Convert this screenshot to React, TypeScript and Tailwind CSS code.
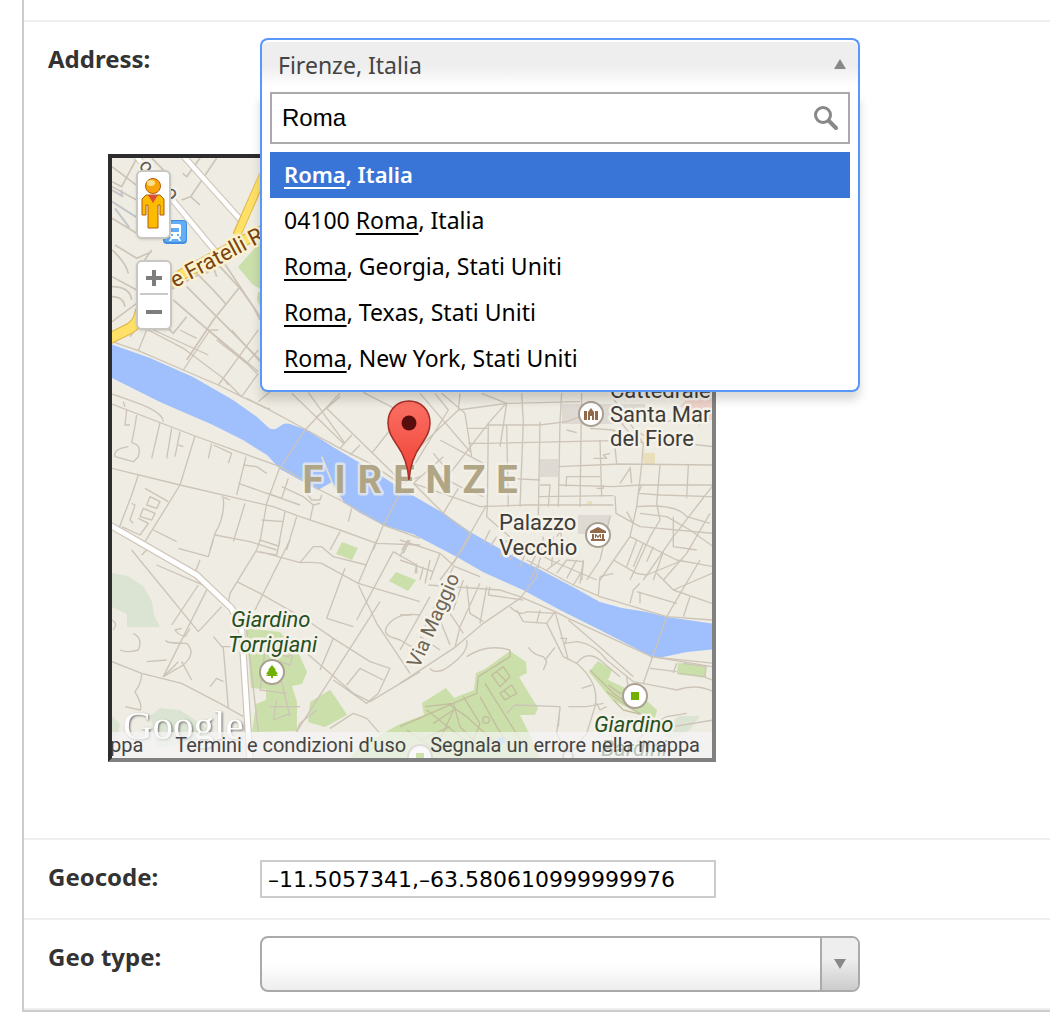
import React from "react";

const northWestRoads = [
  "M336 545L365 560L410 475M336 500L415 560M455 474L500 520M600 474L560 530L548 520M650 474L572 590L600 615",
  "M495 560L680 800L780 950M336 560L410 600M545 600L570 590",
  "M336 655L410 700M336 750C370 780 380 800 385 820M345 735L410 775L455 755M420 800L455 750",
  "M336 860Q390 860 395 900M336 890Q370 890 375 920M336 830L410 870M336 965L410 910M390 1010L415 975",
  "M510 870L640 800L660 800L720 865L760 920L780 960M560 860L780 1080M520 900L740 1090M600 830L650 800",
  "M720 860L640 960L560 1080M640 800L650 830M590 820L640 870L680 915M500 980L520 1000L560 950",
];

const westRoads = [
  "M36 35L115 62L250 120L355 165L425 200L500 235L620 300L720 355L810 400L900 460",
  "M145 0L250 55L370 145L425 200M115 62L140 0M160 0L325 75M240 0L290 25M250 120L330 0L355 0M355 165L475 0M325 0L475 125M395 0L480 95M350 30L440 100L470 130",
  "M425 200L475 130M440 100L475 60M370 145L385 165M475 215L510 185M440 205L500 235L510 235M575 190L730 340M625 187L735 340M720 190L615 300L540 415M790 187L960 275M755 315L720 355M650 260L720 200",
  "M680 235L900 450M815 370L870 300M780 345L750 375M900 490L850 585L820 660",
  "M36 192C100 215 190 240 190 275M36 222L285 318L540 410L660 480L720 510L850 585L960 625",
  "M36 415L240 465L520 530L600 560L720 600L830 640L960 645M70 215L75 230",
  "M285 318L240 465L135 635M180 278L155 385M215 295L200 385M240 305L225 380M235 345L250 350M335 340L325 385M340 345L395 370L385 400M110 255C100 330 90 340 100 340Q125 345 115 380L100 395L45 380C40 360 60 355 85 350",
  "M80 240L75 285L90 285M115 435L95 495L55 600M135 475L205 515M438 380L410 495M540 410L500 520L480 635M565 445L545 505L505 490M415 460L600 525M370 505Q375 560 345 610L330 660M435 520L400 635M430 405L470 410L500 430M365 500L390 510",
  "M345 615L450 635L530 660M485 570L550 575M555 545L535 650M590 560L560 660M720 605L690 660M755 535L745 575M620 490L635 510L660 510L665 495M640 525L630 570M545 470L610 500L640 525L660 520",
  "M150 500L180 515L170 535L140 525ZM130 535L165 550L155 570L120 560ZM115 565L145 580L120 615L65 590M95 520L105 525L90 570L100 580M160 600L230 635M925 630L905 660M880 470L960 440",
];

const centreRoads = [
  "M125 40L195 100L215 230M105 40L145 90L40 260M60 40L210 215M0 80L70 100M320 68L265 130L150 280M180 40L175 90L50 210M175 90L320 70L540 65M245 40L320 70L300 200M265 130L262 380L260 410L340 480L450 540L590 600",
  "M485 40L480 125L475 380M545 40L540 380M420 125L415 405M365 40L370 125L360 380M320 135L325 380M265 135L420 135L500 125L540 110M205 145L265 145M265 190L640 182M205 190L265 190",
  "M120 180L250 250M150 280L100 220M130 230L40 310M40 310L240 380L380 375L640 375M40 310L130 400L210 460M80 265L180 320L250 350M175 325L130 400M260 375L165 540L120 600M325 295L420 300",
  "M475 260L660 252L940 255M475 315L640 320L720 315L940 315M415 350L640 347M420 315L450 315L445 380M600 180L605 350M570 145L640 150L650 252M640 150L730 190L725 255M500 150L530 158M580 235L620 235L610 225L630 220M640 55L730 190M700 150L760 180L940 200",
  "M725 255L710 380L690 470L600 600M725 315L715 340L780 345L940 350M690 265L660 310M690 260L695 310M780 255L770 370M865 255L860 355M940 315L905 360L820 470L730 600M710 380Q830 370 860 410L930 430",
  "M645 347L648 400L720 440L940 460M680 395L700 430M770 370L780 420L750 470L690 600M720 400L800 410L870 450M600 290L540 290L500 290L498 320M590 325L610 325L610 315",
  "M930 400L860 520L790 600M820 410L820 500L890 510M870 450L940 500M690 470L830 540L940 560M710 480L680 560M730 490L700 560M760 500L740 545M790 515L760 600M630 410L600 540L560 600",
  "M270 450L250 490M290 470L270 500M320 480L300 530M350 500L330 540M380 510L360 560M410 520L390 560M430 470L420 540M460 470L455 560M480 440L490 520M500 430L470 470M215 460L160 550M410 560L390 600M500 540L550 545L545 600",
  "M0 480L120 520L165 560L240 590M30 480L10 520M50 550L45 580M70 560L60 600M120 520L90 600M0 540L100 575M780 130L940 90M690 160L640 100",
];

const southWestRoads = [
  "M95 30L295 275L365 200M125 45L140 30M170 75L320 140M235 25L325 50L340 0M325 140L190 410L235 365M295 135L215 255M300 60L280 110",
  "M480 0L470 30L390 160L385 190M470 35L530 45M540 0L530 45M480 35L600 68Q640 65 665 70L775 130L960 185M480 0L535 18M570 0L465 210M410 125L480 160L620 240L700 295L810 365L870 385M600 68L640 20L665 20L700 50L800 75",
  "M775 130L830 0M735 85L680 235L760 260M840 185L590 575M880 35L770 240M775 135L830 250L930 400M880 35L950 75L950 100M925 0L900 50",
  "M36 365L125 400L245 430L360 490L430 530M125 400Q125 430 105 455Q130 500 120 510L75 500M190 410L250 375Q290 340 260 310Q190 310 200 300M245 265L225 270Q235 285 255 290L270 265M245 365L275 420M140 365L200 360",
  "M100 280Q130 295 115 330Q80 340 60 330M36 240Q55 250 40 270M330 440L350 415L370 425M340 290L370 325L385 505M440 270L475 575M365 320L395 320",
  "M620 340L760 460L810 485L960 395M700 295L660 390M700 420L800 490L835 460L870 385M850 420L780 385L740 435M600 550L650 510M690 565L760 520L800 535L840 580M590 575L600 550",
  "M960 225Q890 215 860 260Q850 280 870 290L900 300Q930 320 960 330M480 310L550 340M495 330L480 450L560 460M520 340L565 350L580 340L570 375L540 365M500 420L545 425L570 530M510 500L600 500M530 480L520 540L570 520",
];

const southRoads = [
  "M0 370L165 262L250 190L360 115L410 50L418 0M75 70L90 0M85 75L300 90L360 110L465 155L505 175L755 290L936 320M0 165L35 165M0 270L90 110M160 20L75 200M240 70L180 200L165 262M260 80L240 190M200 75L210 160L250 185M190 60L160 150M120 180L150 255M150 160L190 220M60 230L120 270",
  "M270 80L265 105L370 120M330 140Q360 170 380 155L465 160M350 150L370 185L440 190L490 290L530 310Q600 370 585 440L560 520L520 570M410 190L420 150M440 190L465 155L505 300M480 235L500 235L495 250L530 245Q580 250 620 300L700 365Q780 380 830 390Q890 370 940 395M505 180L610 270L700 350",
  "M385 262Q400 285 430 290L440 305L430 330M465 262L435 300M200 240Q210 280 130 330Q100 340 90 325M330 270Q260 250 200 290M530 310Q560 270 600 300L660 350M730 370L800 170L900 0M545 385L575 375M505 440L560 440L610 430M590 430L600 450L620 440",
  "M750 290L940 310M750 325L830 335M830 310L820 340M850 310L918 320L915 350L835 340M910 350L936 360M680 350L685 385",
  "M320 460L345 435L480 440L475 500M480 445L470 520L500 580M820 500L940 480M740 505L800 470L860 460M700 560L740 510",
  "M380 0L520 75L600 110L700 140L800 170L936 180M600 50L595 105M710 95L830 130M690 130L700 90L720 70M550 0L540 70M770 40L820 90L936 130M850 0L740 45M820 90L936 40M640 0L710 40L740 45M640 40L600 50M870 110L850 170",
  "M720 95L720 130M440 30L480 0M470 40L500 0M500 55L530 0M520 75L545 35",
];

const gardenPaths = [
  "M0 500L160 430L230 400L235 350L330 290L330 270M160 430L180 500L240 560M150 435L200 470L300 560M75 440L160 430M80 450L220 560M255 370L380 570M240 410L290 500L330 560M275 345L310 320L330 350L300 380ZM290 335L320 365M300 400L335 375L350 400L315 420ZM310 390L330 410",
  "M100 490L160 450M110 560L165 440M60 540L150 500M20 510L120 580M190 410L240 490L220 540M620 395L700 450L760 480M570 330L640 400L700 440M625 375L660 400L700 400M640 420L670 450L750 470",
];

function Roads({ lines, className = "stroke-[#cdc4b8]" }: { lines: string[]; className?: string }) {
  return (
    <g className={className} fill="none" strokeLinejoin="round">
      {lines.map((d) => (
        <path key={d} d={d} />
      ))}
    </g>
  );
}

function Poi({ x, y, children }: { x: number; y: number; children: React.ReactNode }) {
  return (
    <g transform={`translate(${x} ${y})`}>
      <circle r="12" fill="#fff" stroke="#aaa092" strokeWidth="2" />
      {children}
    </g>
  );
}

const RIVER =
  "M108 343L150 358L193 377L233 400L257 417L269 428Q274 431 279 427Q284 422 290 424L307 430L333 447L360 463L383 477L400 488L443 513L472 533L520 560L537 568L573 587L600 602L622 608L647 612L667 617L716 624L716 649L687 652L663 657L652 657L633 647L600 630L560 610L523 590L483 572L457 557L413 534L383 525L360 513L343 502L332 482L318 490L300 480L280 469L267 455L243 440L213 425L160 402L108 376Z";

const MAIN_ROAD = "M20 -50L90 -10L290 105L395 205L425 270L450 660";
const RING_ROAD = "M320 1020L390 985Q415 970 420 940Q430 900 520 838L790 690";

function MapDrawing() {
  return (
    <svg viewBox="112 158 600 600" className="block h-full w-full font-[Roboto,sans-serif]" role="img" aria-label="Map of Firenze">
      <rect x="112" y="158" width="600" height="600" fill="#efece3" />

      <g fill="#dbe4d2">
        <path d="M112 573L128 576L144 587L152 602L154 615L160 627H127V614L112 607Z" />
        <path d="M150 716L160 708L180 710L192 718L212 732L200 740L158 748Z" />
        <path d="M112 716L120 724L118 735L112 740Z" />
        <path d="M660 730L680 716L700 716L690 730L670 740Z" />
      </g>
      <g fill="#cadfaa">
        <path d="M246 628L280 632L298 652L307 672L302 684L292 686L297 702V731L252 732L256 704L266 700V689L251 688Z" />
        <path d="M310 702L330 690L336 698L347 715L325 727L308 722Z" />
        <path d="M342 542L358 548L352 560L336 554Z" />
        <path d="M396 572L416 580L408 591L389 581Z" />
        <path d="M360 746L400 724L424 715L422 703L446 688L454 698L474 690L476 673L485 669L510 651L526 662L527 673L519 677L538 708L535 715H520L530 735L540 758H350Z" />
        <path d="M598 661L612 670L608 680L640 695L657 710L655 718L640 714L612 700L589 672Z" />
        <path d="M678 663L706 666V678L677 674Z" />
        <path d="M238 267L262 240V290L252 284Z" />
        <path d="M258 292H264V315L257 300Z" />
      </g>
      <g fill="#dedad3">
        <path d="M562 404H645V424H562Z" />
        <path d="M540 459H558V477H540Z" />
        <path d="M578 515L612 515L605 534H578Z" />
      </g>
      <path d="M642 453H655V465H644ZM587 501H592V505H587Z" fill="#eadfbb" />
      <path d="M680 406L688 398H712V420H700V427L694 420Z" fill="#eed2c9" />

      <g transform="scale(.333333)" strokeWidth="5">
        <Roads lines={northWestRoads} />
        <path d="M336 570L370 590M365 570V590M336 605L415 655M345 625L388 683" stroke="#c3c5c9" strokeWidth="6" fill="none" />
      </g>

      <path d={RIVER} fill="#9fc0fd" />

      <g transform="translate(100 330) scale(.333333)" strokeWidth="4">
        <Roads lines={westRoads} />
        <path d="M665 380L695 455L728 515" stroke="#e4dfd5" strokeWidth="5" fill="none" />
      </g>
      <g transform="translate(400 380) scale(.333333)" strokeWidth="4">
        <Roads lines={centreRoads} />
      </g>
      <g transform="translate(100 540) scale(.333333)" strokeWidth="4">
        <Roads lines={southWestRoads} />
        <path d={MAIN_ROAD} stroke="#cdc4b8" strokeWidth="22" fill="none" />
        <path d={MAIN_ROAD} stroke="#fff" strokeWidth="15" fill="none" />
      </g>
      <g transform="translate(400 560) scale(.333333)" strokeWidth="4">
        <Roads lines={southRoads} />
        <Roads lines={gardenPaths} className="stroke-[#c3bd9e]" />
        <circle cx="258" cy="480" r="10" fill="#cadfaa" stroke="#c3bd9e" />
        <path d="M290 535L310 530L315 550L295 555Z" fill="#9fc0fd" />
      </g>

      <g transform="scale(.333333)" fill="none">
        <path d="M552 470L722 660M410 470L655 765" stroke="#cdc4b8" strokeWidth="20" />
        <path d="M552 470L722 660M410 470L655 765" stroke="#fff" strokeWidth="14" />
        <path d="M790 525L710 705" stroke="#e3b94c" strokeWidth="27" />
        <path d={RING_ROAD} stroke="#e3b94c" strokeWidth="35" />
        <path d="M793 515L704 722" stroke="#ffe168" strokeWidth="20" />
        <path d={RING_ROAD} stroke="#ffe168" strokeWidth="28" />
      </g>

      <g stroke="#f5f2ea" strokeWidth="5" strokeLinejoin="round" paintOrder="stroke">
        <g fontSize="20" fill="#5e5a52">
          <text transform="translate(138 166) rotate(50)">os</text>
          <text transform="translate(163 193) rotate(50)">o</text>
        </g>
        <text transform="translate(175 288) rotate(-28)" fontSize="22" fill="#7b4310" stroke="#fbf3cf">e Fratelli R</text>
        <text transform="translate(419 669) rotate(-66)" fontSize="20" fill="#6f6758">Via Maggio</text>
        <g fontSize="22" fill="#3f3c38">
          <text x="610" y="398">Cattedrale</text>
          <text x="610" y="422">Santa Mar</text>
          <text x="610" y="446">del Fiore</text>
          <text x="499" y="530">Palazzo</text>
          <text x="499" y="555">Vecchio</text>
        </g>
        <g fontSize="22" fontStyle="italic" fill="#25501f">
          <text x="231" y="627">Giardino</text>
          <text x="228" y="652">Torrigiani</text>
          <text x="594" y="732">Giardino</text>
          <text x="601" y="756">Bardini</text>
        </g>
        <g fontSize="38" fontWeight="700" fill="#b0a585" textAnchor="middle" strokeOpacity=".7">
          {["F", "I", "R", "E", "N", "Z", "E"].map((letter, i) => (
            <text key={i} x={[313, 340, 370, 404, 439, 474, 507][i]} y="493">
              {letter}
            </text>
          ))}
        </g>
      </g>

      <Poi x={591} y={414}>
        <path d="M-7-3h3V6h-3ZM4-3h3V6H4ZM-3-2L0-6L3-2V6H1V2H-1V6H-3Z" fill="#93694b" />
      </Poi>
      <Poi x={598} y={535}>
        <path d="M-8-4L0-8L8-4V-2H-8ZM-6-1h2V4h-2ZM4-1h2V4H4ZM-7 4H7V6H-7ZM-3 3V-1h1L0 1L2-1H3V3H2V1L0 3L-2 1V3Z" fill="#93694b" />
      </Poi>
      <Poi x={272} y={672}>
        <path d="M0-7L4-2H3L6 2H4L6 4H1V6H-1V4H-6L-4 2H-6L-3-2H-4Z" fill="#72b000" />
      </Poi>
      <Poi x={635} y={696}>
        <path d="M-4-4h8v8h-8Z" fill="#72b000" />
      </Poi>
      <Poi x={420} y={757}>
        <path d="M-4-4h8v8h-8Z" fill="#72b000" />
      </Poi>
      <circle cx="568" cy="756" r="5" fill="#efece3" stroke="#aaa092" strokeWidth="2" />

      <g transform="translate(163 220)">
        <rect width="24" height="24" rx="4" fill="#3f8ee0" />
        <rect x="1" y="1" width="22" height="21" rx="3" fill="#62adf6" />
        <path d="M8 4h8q2 0 2 2v9q0 2-2 2H8q-2 0-2-2V6q0-2 2-2ZM8 17l-2 4h2l1-2h6l1 2h2l-2-4Z" fill="#fff" />
        <path d="M8 8h8v4H8ZM8 14h2v2H8ZM14 14h2v2h-2Z" fill="#62adf6" />
      </g>

      <defs>
        <linearGradient id="pin" x1="0" y1="0" x2="0" y2="1">
          <stop offset="0" stopColor="#fb7064" />
          <stop offset="1" stopColor="#ef4033" />
        </linearGradient>
      </defs>
      <path
        d="M409 480C408 467 405 456 397 445C391 436 388 431 388 423C388 410 397 401 409 401S430 410 430 423C430 431 427 436 421 445C413 456 410 467 409 480Z"
        fill="url(#pin)"
        stroke="#a52e26"
        strokeWidth="1.500"
      />
      <circle cx="409" cy="423" r="7.500" fill="#590e0e" />

      <text x="123" y="739" fontSize="41" fill="#fff" className="font-[Liberation_Serif,serif] drop-shadow-[1px_1px_1px_#0008]">
        Google
      </text>
    </svg>
  );
}

function Pegman() {
  return (
    <svg viewBox="0 0 26 54" className="h-[54px] w-[26px]" aria-hidden="true">
      <path d="M6 18H20L24 22V38H20V28H18V51H8V28H6V38H2V22Z" fill="#fabb00" stroke="#b45c0a" strokeWidth="1" />
      <path d="M8 18H18L13 26Z" fill="#dd4b39" />
      <circle cx="13" cy="9" r="7.500" fill="#f9a40a" stroke="#b45c0a" strokeWidth="1" />
      <ellipse cx="11" cy="6" rx="4" ry="3" fill="#ffe08a" />
    </svg>
  );
}

function MapView() {
  return (
    <div className="relative aspect-square w-full max-w-[608px] overflow-hidden border-4 border-t-[#2c2c2c] border-r-[#808080] border-b-[#808080] border-l-[#2c2c2c]">
      <MapDrawing />
      <button
        type="button"
        aria-label="Street View"
        className="absolute top-3 left-6 flex h-[69px] w-[35px] items-center justify-center rounded-md border-2 border-[#c9c7c2] bg-white pr-0.5 pb-0.5 shadow"
      >
        <Pegman />
      </button>
      <div className="absolute top-[102px] left-6 w-[36px] rounded-md border-2 border-[#c9c7c2] bg-white px-0.5 shadow">
        <button type="button" aria-label="Zoom in" className="flex h-[33px] w-full items-center justify-center border-b-2 border-[#c9c9c9]">
          <svg viewBox="0 0 16 16" className="size-4"><path d="M6 0h4v6h6v4h-6v6H6v-6H0V6h6Z" fill="#7d7d7d" /></svg>
        </button>
        <button type="button" aria-label="Zoom out" className="flex h-[33px] w-full items-center justify-center">
          <svg viewBox="0 0 16 16" className="size-4"><path d="M0 6h16v4H0Z" fill="#7d7d7d" /></svg>
        </button>
      </div>
      <div className="absolute inset-x-0 bottom-0 flex h-[26px] items-center justify-end whitespace-nowrap bg-[#f5f5f5]/70 pr-3 font-[Roboto,sans-serif] text-[20px] text-[#444]">
        <span className="mr-8">ppa</span>
        <a href="#terms">Termini e condizioni d'uso</a>
        <span className="mx-3 h-full w-px bg-[#cadfaa]" />
        <a href="#report">Segnala un errore nella mappa</a>
      </div>
    </div>
  );
}

const options = [
  { before: "", after: ", Italia" },
  { before: "04100 ", after: ", Italia" },
  { before: "", after: ", Georgia, Stati Uniti" },
  { before: "", after: ", Texas, Stati Uniti" },
  { before: "", after: ", New York, Stati Uniti" },
];

function AddressSelect() {
  return (
    <div className="relative z-10 w-full max-w-[600px]">
      <button
        id="address"
        type="button"
        aria-haspopup="listbox"
        aria-expanded="true"
        className="flex h-[54px] w-full items-center justify-between rounded-t-lg border-2 border-b-0 border-[#5897fb] bg-linear-to-b from-[#eee] from-50% to-white to-90% pr-3 pb-0.5 pl-4 text-[23px] text-[#444] shadow-[inset_0_2px_0_#fff]"
      >
        Firenze, Italia
        <svg viewBox="0 0 12 10" className="mb-0.5 h-[10px] w-[12px]" aria-hidden="true"><path d="M6 0L12 10H0Z" fill="#888" /></svg>
      </button>
      <div className="absolute inset-x-0 top-full rounded-b-lg border-2 border-t-0 border-[#5897fb] bg-white px-2 pb-2 shadow-[0_8px_10px_rgba(0,0,0,0.15)]">
        <div className="relative">
          <input
            type="text"
            aria-label="Search address"
            defaultValue="Roma"
            className="block h-[52px] w-full border-2 border-[#aaa] bg-white pr-12 pl-2.5 font-[Liberation_Sans,sans-serif] text-[24px] text-black outline-none"
          />
          <svg viewBox="0 0 24 24" className="absolute top-[14px] right-3 size-6" fill="none" stroke="#888" aria-hidden="true">
            <circle cx="9" cy="9" r="7.500" strokeWidth="3" />
            <path d="M15 15L22 22" strokeWidth="4" strokeLinecap="round" />
          </svg>
        </div>
        <ul role="listbox" aria-label="Address" className="mt-2">
          {options.map((o, i) => (
            <li
              key={i}
              role="option"
              aria-selected={i === 0}
              className={
                i === 0
                  ? "flex h-[46px] items-center bg-[#3875d7] px-3.5 pb-0.5 text-[22px] font-semibold whitespace-pre text-white"
                  : "flex h-[46px] items-center px-3.5 pb-0.5 text-[23px] whitespace-pre text-black"
              }
            >
              {o.before}
              <span className="underline decoration-2 underline-offset-4">Roma</span>
              {o.after}
            </li>
          ))}
        </ul>
      </div>
    </div>
  );
}

const labelClass = "w-[212px] shrink-0 text-[24px] leading-[42px] font-bold text-[#333]";

export default function App() {
  return (
    <main className="bg-white pb-2 font-[Noto_Sans,sans-serif]">
      <form className="ml-[22px] border-b-2 border-l-2 border-[#ccc]">
        <div className="h-[22px] border-b-2 border-[#eee]" />
        <section className="border-b-2 border-[#eee] pt-4 pb-[76px] pl-6">
          <div className="flex items-start">
            <label htmlFor="address" className={labelClass}>Address:</label>
            <AddressSelect />
          </div>
          <div className="mt-[62px] pl-[60px]">
            <MapView />
          </div>
        </section>
        <section className="flex h-20 items-start border-b-2 border-[#eee] pl-6">
          <label htmlFor="geocode" className={`${labelClass} pt-4`}>Geocode:</label>
          <input
            id="geocode"
            type="text"
            defaultValue="–11.5057341,–63.580610999999976"
            className="mt-5 h-[38px] w-full max-w-[456px] border-2 border-[#ccc] bg-white px-1.5 font-[DejaVu_Sans,sans-serif] text-[22px] text-black outline-none"
          />
        </section>
        <section className="flex h-[90px] items-start border-b-2 border-[#eee] pl-6">
          <label htmlFor="geotype" className={`${labelClass} pt-4`}>Geo type:</label>
          <div className="relative mt-4 w-full max-w-[600px]">
            <select
              id="geotype"
              className="block h-14 w-full appearance-none rounded-lg border-2 border-[#aaa] bg-linear-to-t from-[#eee] to-white to-50% px-4 text-[23px] text-[#444] outline-none"
            >
              <option value="" />
            </select>
            <div className="pointer-events-none absolute inset-y-0.5 right-0.5 flex w-[38px] items-center justify-center rounded-r-md border-l-2 border-[#aaa] bg-linear-to-t from-[#ccc] to-[#eee] to-60%">
              <svg viewBox="0 0 12 10" className="h-[10px] w-[12px]" aria-hidden="true"><path d="M0 0H12L6 10Z" fill="#888" /></svg>
            </div>
          </div>
        </section>
      </form>
    </main>
  );
}
